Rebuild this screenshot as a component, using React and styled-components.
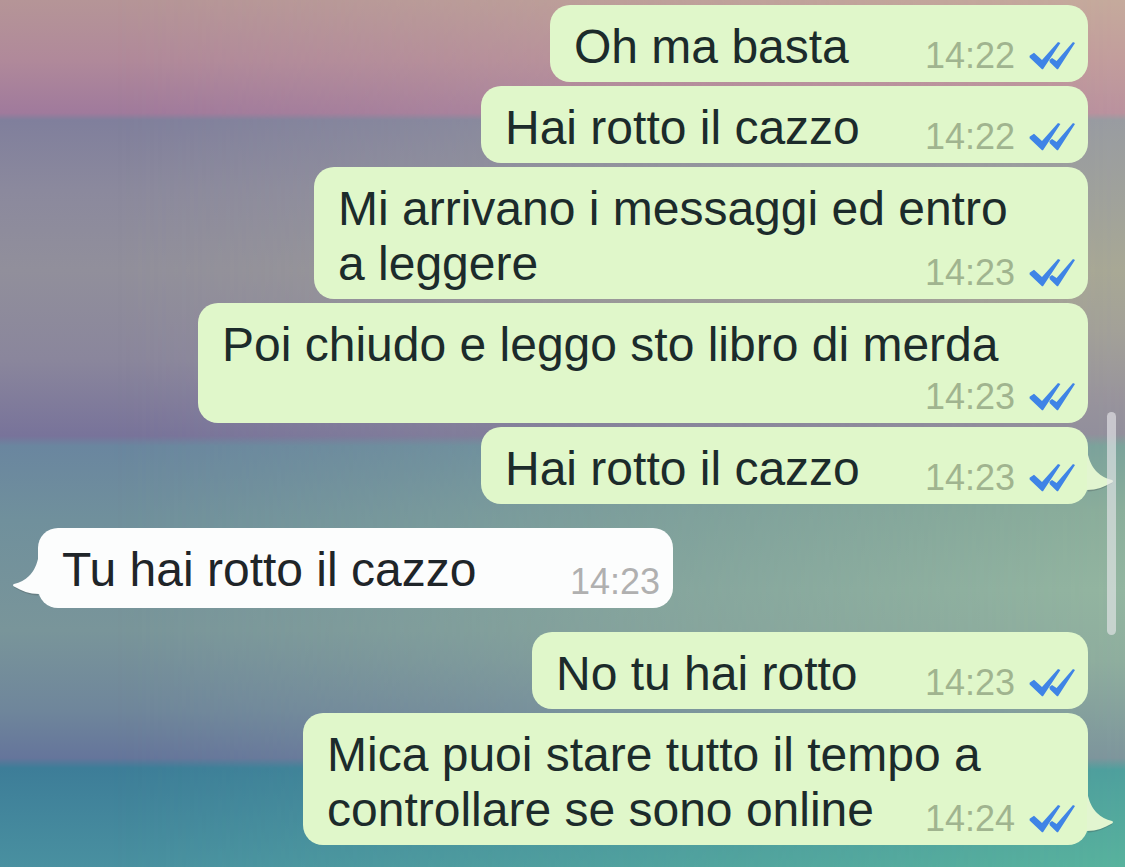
import React from "react";
import styled, { createGlobalStyle, css } from "styled-components";

const GlobalStyle = createGlobalStyle`
  *, *::before, *::after { box-sizing: border-box; }
  html { height: 100%; }
  body {
    margin: 0;
    min-height: 100%;
    font-family: "Liberation Sans", Arial, sans-serif;
  }
`;

const warmBands = `linear-gradient(to bottom,
  #b59597 0px, #b0899a 60px, #a07a9c 113px,
  #807f9c 120px, #8b899d 190px, #918f9b 270px, #8a869c 360px, #78739a 436px,
  #6a869f 446px, #70909c 520px, #79959a 630px, #6f869b 710px, #65759b 758px,
  #3d7d98 768px, #4990a0 867px)`;

const greenBands = `linear-gradient(to bottom,
  #c5aa9c 0px, #c29d9c 60px, #ba929e 113px,
  #999ca1 120px, #a0a29b 200px, #a8a895 270px, #a3a198 330px, #98949c 400px, #93909c 434px,
  #7ca39b 446px, #8bae9b 510px, #93b5a0 590px, #8fae9e 660px, #7e969c 758px,
  #4fa09d 770px, #58b29d 867px)`;

const Chat = styled.main`
  position: relative;
  isolation: isolate;
  overflow: hidden;
  min-height: 100vh;
  display: flex;
  flex-direction: column;
  gap: 24px;
  padding: 5px 37px 22px 38px;
  background: ${warmBands};

  &::before {
    content: "";
    position: absolute;
    inset: 0;
    z-index: -1;
    background: ${greenBands};
    mask-image: linear-gradient(to right, transparent 10%, #000 100%);
  }
`;

const Group = styled.section`
  display: flex;
  flex-direction: column;
  align-items: ${(p) => (p.$own ? "flex-end" : "flex-start")};
  gap: 4px;
`;

const Bubble = styled.article`
  position: relative;
  display: grid;
  grid-template-columns: 1fr auto;
  width: ${(p) => p.$width}px;
  max-width: 100%;
  padding: 14px 13px 8px 24px;
  border-radius: 20px;
  background: #e0f7ca;
  color: #1c2b2b;

  ${(p) =>
    !p.$own &&
    css`
      min-height: 80px;
      background: #fcfdfd;
      color: #1f2529;
    `}
`;

const Text = styled.p`
  display: contents;
`;

const Line = styled.span`
  grid-column: ${(p) => (p.$full ? "1 / -1" : "1")};
  font-size: 48px;
  line-height: 55px;
`;

const Meta = styled.footer`
  grid-column: 2;
  align-self: end;
  display: flex;
  align-items: center;
  gap: 14px;
  margin-top: 7px;
  font-size: 36px;
  line-height: 36px;
  color: ${(p) => (p.$own ? "#a0b48f" : "#b0b0b0")};
`;

const TickIcon = styled.svg`
  width: 46px;
  height: 30px;
  fill: #3f84e6;
`;

const TailIcon = styled.svg`
  position: absolute;
  bottom: 12px;
  width: 26px;
  height: 40px;
  overflow: visible;
  ${(p) =>
    p.$own
      ? css`
          left: 100%;
          fill: #e2f5d0;
        `
      : css`
          right: 100%;
          fill: #fcfdfd;
          transform: scaleX(-1);
        `}
`;

const TailShadow = styled.path`
  fill: rgba(70, 80, 80, 0.3);
`;

const ScrollThumb = styled.div`
  position: absolute;
  top: 412px;
  right: 9px;
  width: 9px;
  height: 223px;
  border-radius: 5px;
  background: rgba(232, 232, 236, 0.62);
`;

function ReadTicks() {
  return (
    <TickIcon viewBox="0 0 46 30" role="img" aria-label="Letto">
      <path d="M0.600 14.800 L5 11.800 L13 19 L29 1 L31.400 2 L14 28.300 L13 28.300 L0.600 16.400 Z" />
      <path d="M20.400 19 L23 17 L27.600 20 L44 1 L46 2 L29 28.300 L28 28.300 L20.800 21.200 Z" />
    </TickIcon>
  );
}

function Tail({ own }) {
  return (
    <TailIcon $own={own} viewBox="0 0 26 40" aria-hidden="true">
      <TailShadow d="M0 37 C9 37 16 34.500 24 30 L24 31.500 C16 36 9 39 0 39.500 Z" />
      <path d="M-1 2 L0 3 C2 11 5 16 9 20 C13 24 18 26.500 24 28 Q26 29 24 30.500 C16 35 9 38 -1 38 Z" />
    </TailIcon>
  );
}

const groups = [
  {
    own: true,
    messages: [
      { lines: ["Oh ma basta"], time: "14:22", width: 538 },
      { lines: ["Hai rotto il cazzo"], time: "14:22", width: 607 },
      { lines: ["Mi arrivano i messaggi ed entro", "a leggere"], time: "14:23", width: 774 },
      {
        lines: ["Poi chiudo e leggo sto libro di merda"],
        time: "14:23",
        width: 890,
        metaBelow: true,
      },
      { lines: ["Hai rotto il cazzo"], time: "14:23", width: 607 },
    ],
  },
  {
    own: false,
    messages: [{ lines: ["Tu hai rotto il cazzo"], time: "14:23", width: 635 }],
  },
  {
    own: true,
    messages: [
      { lines: ["No tu hai rotto"], time: "14:23", width: 556 },
      {
        lines: ["Mica puoi stare tutto il tempo a", "controllare se sono online"],
        time: "14:24",
        width: 785,
      },
    ],
  },
];

function Message({ message, own, last }) {
  const { lines, time, width, metaBelow } = message;
  return (
    <Bubble $own={own} $width={width}>
      <Text>
        {lines.map((line, i) => (
          <Line key={i} $full={metaBelow || i < lines.length - 1}>
            {line}
          </Line>
        ))}
      </Text>
      <Meta $own={own}>
        <time>{time}</time>
        {own && <ReadTicks />}
      </Meta>
      {last && <Tail own={own} />}
    </Bubble>
  );
}

export default function App() {
  return (
    <>
      <GlobalStyle />
      <Chat>
        {groups.map((group, g) => (
          <Group key={g} $own={group.own}>
            {group.messages.map((message, i) => (
              <Message
                key={i}
                message={message}
                own={group.own}
                last={i === group.messages.length - 1}
              />
            ))}
          </Group>
        ))}
        <ScrollThumb />
      </Chat>
    </>
  );
}
